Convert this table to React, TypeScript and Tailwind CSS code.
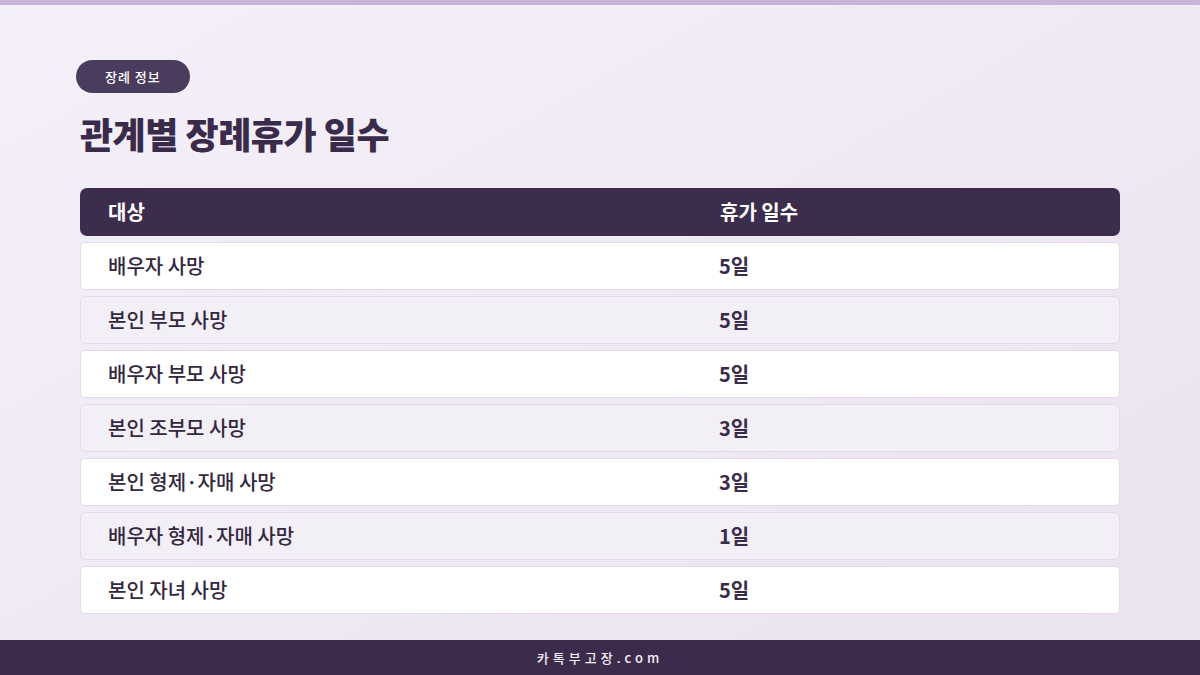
const rows = [
  { who: "배우자 사망", days: "5일" },
  { who: "본인 부모 사망", days: "5일" },
  { who: "배우자 부모 사망", days: "5일" },
  { who: "본인 조부모 사망", days: "3일" },
  { who: "본인 형제·자매 사망", days: "3일" },
  { who: "배우자 형제·자매 사망", days: "1일" },
  { who: "본인 자녀 사망", days: "5일" },
];

export default function App() {
  return (
    <div
      className="w-[1200px] h-[675px] flex flex-col bg-gradient-to-br from-[#f4f0f9] to-[#ebe3f0] text-[#3a2b4a]"
      style={{ fontFamily: '"Noto Sans CJK KR", "Noto Sans", sans-serif' }}
    >
      <div className="h-[5px] bg-[#c6b4da]" />

      <div className="flex-1 flex flex-col px-20 pt-[55px]">
        <div className="self-start -ml-1 h-[33px] px-[29px] flex items-center rounded-full bg-[#4a3c5c] text-white text-[13px] tracking-[1px] font-medium">
          장례 정보
        </div>
        <h1 className="mt-[18px] text-[36px] leading-[44px] font-black tracking-[-0.5px] text-[#3a2b4a]">
          관계별 장례휴가 일수
        </h1>

        <div className="mt-[33px] flex flex-col gap-[6px]">
          <div className="h-[48px] grid grid-cols-[612px_1fr] items-center px-7 rounded-[7px] bg-[#3d2d4d] text-white text-[20px] font-bold">
            <span>대상</span>
            <span>휴가 일수</span>
          </div>
          {rows.map((r, i) => (
            <div
              key={i}
              className={`h-[48px] grid grid-cols-[611px_1fr] items-center px-[27px] rounded-[5px] border border-[#e2daea] text-[20px] ${
                i % 2 === 0 ? "bg-white" : "bg-[#f3eff7]"
              }`}
            >
              <span className="font-medium text-[#33283f]">{r.who.replace("·", "\u00b7")}</span>
              <span className="font-bold">{r.days}</span>
            </div>
          ))}
        </div>
      </div>

      <div className="h-[35px] flex items-center justify-center bg-[#3d2b4b] text-[#f3eef7] text-[13px] tracking-[4px] font-medium">
        카톡부고장.com
      </div>
    </div>
  );
}
